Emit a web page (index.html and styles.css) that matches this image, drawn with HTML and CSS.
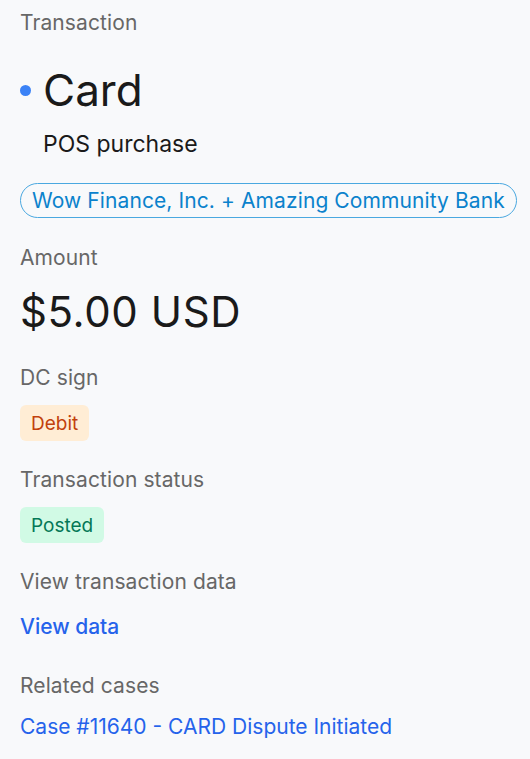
FILE: index.html
```html
<!DOCTYPE html>
<html>
<head>
<meta charset="utf-8">
<link rel="stylesheet" href="styles.css">
</head>
<body>
<div class="panel">
  <div class="label first">Transaction</div>
  <div class="title-row">
    <span class="dot"></span>
    <span class="title">Card</span>
  </div>
  <div class="subtitle">POS purchase</div>
  <div class="pill-row"><span class="pill">Wow Finance, Inc. + Amazing Community Bank</span></div>

  <div class="label">Amount</div>
  <div class="amount">$5.00 USD</div>

  <div class="label">DC sign</div>
  <div class="badge-row"><span class="badge debit">Debit</span></div>

  <div class="label">Transaction status</div>
  <div class="badge-row"><span class="badge posted">Posted</span></div>

  <div class="label">View transaction data</div>
  <div class="link-row"><a class="link strong" href="#">View data</a></div>

  <div class="label related">Related cases</div>
  <div class="link-row tight"><a class="link" href="#">Case #11640 - CARD Dispute Initiated</a></div>
</div>
</body>
</html>
```
FILE: styles.css
```css
html, body {
  margin: 0;
  padding: 0;
  background: #f8f9fb;
}
body {
  font-family: Inter, "Noto Sans", sans-serif;
  color: #1a1a1a;
}
.panel {
  padding: 9px 20px 0 20px;
  display: flex;
  flex-direction: column;
}
.label {
  font-size: 21px;
  line-height: 28px;
  color: #676767;
  margin-top: 25px;
  letter-spacing: 0.1px;
}
.label.first {
  margin-top: 0;
}
.label.related {
  margin-top: 31px;
}
.title-row {
  display: flex;
  align-items: center;
  margin-top: 27px;
  height: 52px;
}
.dot {
  width: 11px;
  height: 11px;
  border-radius: 50%;
  background: #3b82f6;
  margin: 0 12px 0 0;
}
.title {
  font-size: 44px;
  line-height: 52px;
  color: #1a1a1a;
}
.subtitle {
  font-size: 23px;
  line-height: 30px;
  margin: 13px 0 0 23px;
  color: #1a1a1a;
}
.pill-row {
  display: flex;
  margin-top: 24px;
}
.pill {
  flex-shrink: 0;
  white-space: nowrap;
  border: 1px solid #4aa8e0;
  border-radius: 18px;
  padding: 0 11px;
  height: 33px;
  display: flex;
  align-items: center;
  font-size: 21px;
  letter-spacing: 0.1px;
  color: #0b82cc;
}
.pill-row + .label {
  margin-top: 26px;
}
.amount {
  font-size: 42px;
  line-height: 50px;
  margin-top: 15px;
  letter-spacing: 0.6px;
  color: #1a1a1a;
}
.amount + .label {
  margin-top: 27px;
}
.badge-row {
  display: flex;
  margin-top: 13px;
}
.badge {
  height: 36px;
  padding: 0 11px;
  border-radius: 6px;
  display: flex;
  align-items: center;
  font-size: 19px;
}
.badge.debit {
  background: #ffedd5;
  color: #c2410c;
}
.badge.posted {
  background: #d1fae5;
  color: #047857;
}
.link-row {
  margin-top: 17px;
}
.link-row.tight {
  margin-top: 13px;
}
.link {
  font-size: 21px;
  line-height: 28px;
  color: #2563eb;
  text-decoration: none;
  display: block;
}
.link.strong {
  font-weight: 500;
}
```
